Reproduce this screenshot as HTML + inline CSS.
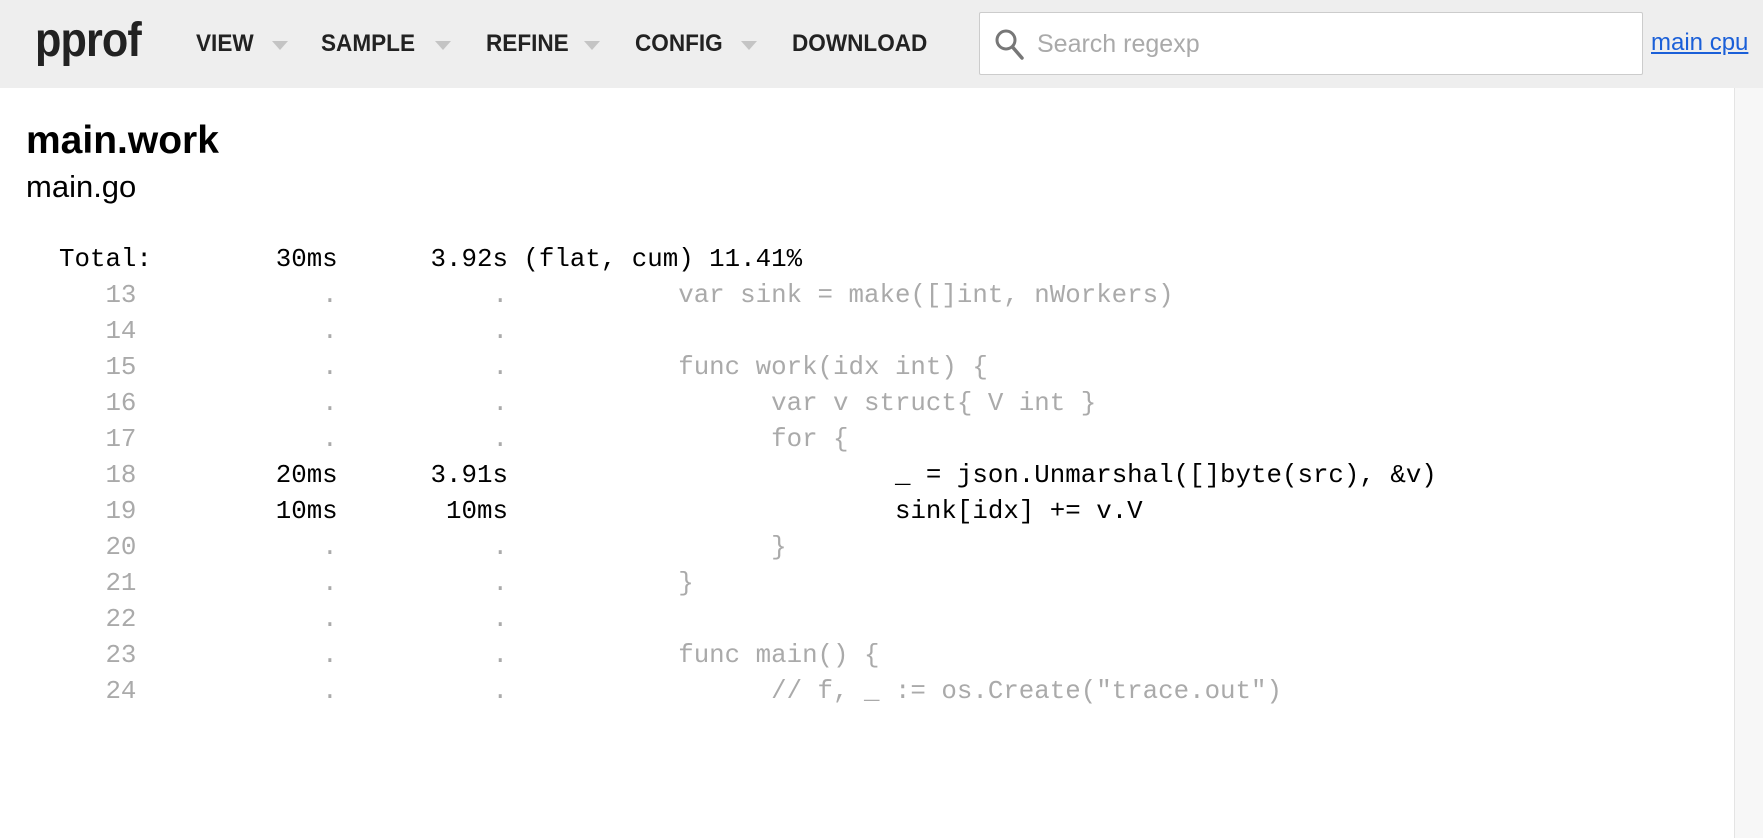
<!DOCTYPE html>
<html><head><meta charset="utf-8"><style>
body{margin:0;width:1763px;height:838px;overflow:hidden;background:#fff;font-family:"Liberation Sans",Arial,sans-serif;position:relative}
.hdr{position:absolute;left:0;top:0;width:1763px;height:88px;background:#eee}
.logo{position:absolute;left:35px;top:13px;font-size:48px;font-weight:bold;color:#222;letter-spacing:-1px;transform:scaleX(0.9);transform-origin:left}
.nav{position:absolute;top:30px;font-size:24px;color:#222;font-weight:bold;transform:scaleX(0.94);transform-origin:left}
.tri{position:absolute;top:41px;width:0;height:0;border-left:8px solid transparent;border-right:8px solid transparent;border-top:9px solid #c4c4c4}
.search{position:absolute;left:979px;top:12px;width:664px;height:63px;background:#fff;border:1px solid #ccc;border-radius:2px;box-sizing:border-box}
.ph{position:absolute;left:57px;top:17px;font-size:25px;color:#aaa}
.link{position:absolute;left:1651px;top:29px;font-size:24px;color:#1a5fd8;text-decoration:underline}
.sb{position:absolute;left:1734px;top:88px;width:29px;height:750px;background:#f7f7f7;border-left:1px solid #e4e4e4}
h1{position:absolute;left:26px;top:119px;margin:0;font-size:39px;font-weight:bold}
.file{position:absolute;left:26px;top:169px;font-size:31px}
pre{position:absolute;left:59px;top:242px;margin:0;font-family:"Liberation Mono",monospace;font-size:25.8px;line-height:36px;color:#aaa}
.k{color:#000}
</style></head><body>
<div class="hdr">
<div class="logo">pprof</div>
<div class="nav" style="left:196px">VIEW</div><div class="tri" style="left:272px"></div>
<div class="nav" style="left:321px">SAMPLE</div><div class="tri" style="left:435px"></div>
<div class="nav" style="left:486px">REFINE</div><div class="tri" style="left:584px"></div>
<div class="nav" style="left:635px">CONFIG</div><div class="tri" style="left:741px"></div>
<div class="nav" style="left:792px">DOWNLOAD</div>
<div class="search">
<svg style="position:absolute;left:14px;top:15px" width="32" height="34" viewBox="0 0 32 34"><circle cx="12" cy="12" r="9" fill="none" stroke="#777" stroke-width="3"/><line x1="18.5" y1="19" x2="28" y2="30" stroke="#777" stroke-width="3.5" stroke-linecap="round"/></svg>
<div class="ph">Search regexp</div></div>
<div class="link">main cpu</div>
</div>
<div class="sb"></div>
<h1>main.work</h1>
<div class="file">main.go</div>
<pre><span class="k">Total:        30ms      3.92s (flat, cum) 11.41%</span>
   13            .          .           var sink = make([]int, nWorkers)
   14            .          .
   15            .          .           func work(idx int) {
   16            .          .                 var v struct{ V int }
   17            .          .                 for {
   18         <span class="k">20ms      3.91s                         _ = json.Unmarshal([]byte(src), &amp;v)</span>
   19         <span class="k">10ms       10ms                         sink[idx] += v.V</span>
   20            .          .                 }
   21            .          .           }
   22            .          .
   23            .          .           func main() {
   24            .          .                 // f, _ := os.Create("trace.out")</pre>
</body></html>
